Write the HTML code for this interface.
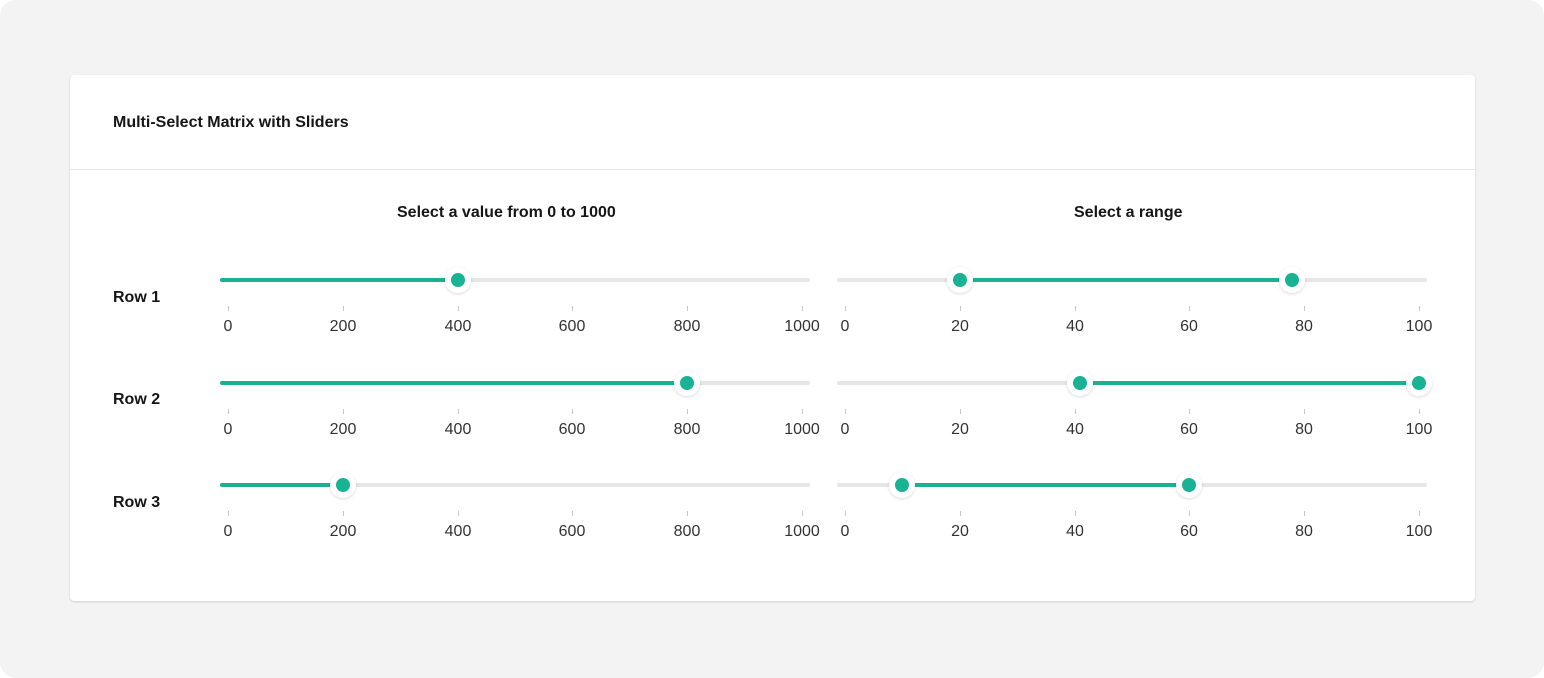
<!DOCTYPE html>
<html><head><meta charset="utf-8"><style>
body{margin:0;width:1544px;height:678px;background:#fff;font-family:"Liberation Sans",sans-serif;position:relative;overflow:hidden}
.bg{position:absolute;left:0;top:0;width:1544px;height:678px;background:#f3f3f3;border-radius:16px}
.card{position:absolute;left:70px;top:75px;width:1405px;height:526px;background:#fff;border-radius:4px;box-shadow:0 1px 2px rgba(0,0,0,.15)}
.hline{position:absolute;left:70px;top:169px;width:1405px;height:1px;background:#e6e6e6}
.t{position:absolute;color:#161616;font-size:16px;white-space:nowrap}
.b{font-weight:bold}
.tr{position:absolute;height:4px;border-radius:2px;background:#e6e6e6}
.f{position:absolute;height:4px;border-radius:2px;background:#19b394}
.th{position:absolute;width:26px;height:26px;border-radius:50%;background:#fff;box-shadow:0 1px 3px rgba(0,0,0,.15)}
.th::after{content:"";position:absolute;left:6px;top:6px;width:14px;height:14px;border-radius:50%;background:#19b394}
.tk{position:absolute;width:1px;height:5px;background:#c8c8c8}
.l{position:absolute;width:80px;margin-left:-40px;text-align:center;font-size:16px;color:#333}
</style></head><body>
<div class="bg"></div>
<div class="card"></div>
<div class="hline"></div>
<div class="t b" style="left:113px;top:114px;font-size:16px">Multi-Select Matrix with Sliders</div>
<div class="t b" style="left:397px;top:204px">Select a value from 0 to 1000</div>
<div class="t b" style="left:1074px;top:204px">Select a range</div>
<div class="t b" style="left:113px;top:289px">Row 1</div>
<div class="t b" style="left:113px;top:391px">Row 2</div>
<div class="t b" style="left:113px;top:494px">Row 3</div>

<!-- Row 1 -->
<div class="tr" style="left:220px;top:278px;width:590px"></div>
<div class="f" style="left:220px;top:278px;width:238px"></div>
<div class="th" style="left:445px;top:267px"></div>
<div class="tr" style="left:837px;top:278px;width:590px"></div>
<div class="f" style="left:960px;top:278px;width:332px"></div>
<div class="th" style="left:947px;top:267px"></div>
<div class="th" style="left:1279px;top:267px"></div>

<!-- Row 2 -->
<div class="tr" style="left:220px;top:381px;width:590px"></div>
<div class="f" style="left:220px;top:381px;width:467px"></div>
<div class="th" style="left:674px;top:370px"></div>
<div class="tr" style="left:837px;top:381px;width:590px"></div>
<div class="f" style="left:1080px;top:381px;width:339px"></div>
<div class="th" style="left:1067px;top:370px"></div>
<div class="th" style="left:1406px;top:370px"></div>

<!-- Row 3 -->
<div class="tr" style="left:220px;top:483px;width:590px"></div>
<div class="f" style="left:220px;top:483px;width:123px"></div>
<div class="th" style="left:330px;top:472px"></div>
<div class="tr" style="left:837px;top:483px;width:590px"></div>
<div class="f" style="left:902px;top:483px;width:287px"></div>
<div class="th" style="left:889px;top:472px"></div>
<div class="th" style="left:1176px;top:472px"></div>

<!-- ticks & labels row 1 -->
<div class="tk" style="left:228px;top:306px"></div><div class="l" style="left:228px;top:318px">0</div>
<div class="tk" style="left:343px;top:306px"></div><div class="l" style="left:343px;top:318px">200</div>
<div class="tk" style="left:458px;top:306px"></div><div class="l" style="left:458px;top:318px">400</div>
<div class="tk" style="left:572px;top:306px"></div><div class="l" style="left:572px;top:318px">600</div>
<div class="tk" style="left:687px;top:306px"></div><div class="l" style="left:687px;top:318px">800</div>
<div class="tk" style="left:802px;top:306px"></div><div class="l" style="left:802px;top:318px">1000</div>
<div class="tk" style="left:845px;top:306px"></div><div class="l" style="left:845px;top:318px">0</div>
<div class="tk" style="left:960px;top:306px"></div><div class="l" style="left:960px;top:318px">20</div>
<div class="tk" style="left:1075px;top:306px"></div><div class="l" style="left:1075px;top:318px">40</div>
<div class="tk" style="left:1189px;top:306px"></div><div class="l" style="left:1189px;top:318px">60</div>
<div class="tk" style="left:1304px;top:306px"></div><div class="l" style="left:1304px;top:318px">80</div>
<div class="tk" style="left:1419px;top:306px"></div><div class="l" style="left:1419px;top:318px">100</div>
<!-- row 2 -->
<div class="tk" style="left:228px;top:409px"></div><div class="l" style="left:228px;top:421px">0</div>
<div class="tk" style="left:343px;top:409px"></div><div class="l" style="left:343px;top:421px">200</div>
<div class="tk" style="left:458px;top:409px"></div><div class="l" style="left:458px;top:421px">400</div>
<div class="tk" style="left:572px;top:409px"></div><div class="l" style="left:572px;top:421px">600</div>
<div class="tk" style="left:687px;top:409px"></div><div class="l" style="left:687px;top:421px">800</div>
<div class="tk" style="left:802px;top:409px"></div><div class="l" style="left:802px;top:421px">1000</div>
<div class="tk" style="left:845px;top:409px"></div><div class="l" style="left:845px;top:421px">0</div>
<div class="tk" style="left:960px;top:409px"></div><div class="l" style="left:960px;top:421px">20</div>
<div class="tk" style="left:1075px;top:409px"></div><div class="l" style="left:1075px;top:421px">40</div>
<div class="tk" style="left:1189px;top:409px"></div><div class="l" style="left:1189px;top:421px">60</div>
<div class="tk" style="left:1304px;top:409px"></div><div class="l" style="left:1304px;top:421px">80</div>
<div class="tk" style="left:1419px;top:409px"></div><div class="l" style="left:1419px;top:421px">100</div>
<!-- row 3 -->
<div class="tk" style="left:228px;top:511px"></div><div class="l" style="left:228px;top:523px">0</div>
<div class="tk" style="left:343px;top:511px"></div><div class="l" style="left:343px;top:523px">200</div>
<div class="tk" style="left:458px;top:511px"></div><div class="l" style="left:458px;top:523px">400</div>
<div class="tk" style="left:572px;top:511px"></div><div class="l" style="left:572px;top:523px">600</div>
<div class="tk" style="left:687px;top:511px"></div><div class="l" style="left:687px;top:523px">800</div>
<div class="tk" style="left:802px;top:511px"></div><div class="l" style="left:802px;top:523px">1000</div>
<div class="tk" style="left:845px;top:511px"></div><div class="l" style="left:845px;top:523px">0</div>
<div class="tk" style="left:960px;top:511px"></div><div class="l" style="left:960px;top:523px">20</div>
<div class="tk" style="left:1075px;top:511px"></div><div class="l" style="left:1075px;top:523px">40</div>
<div class="tk" style="left:1189px;top:511px"></div><div class="l" style="left:1189px;top:523px">60</div>
<div class="tk" style="left:1304px;top:511px"></div><div class="l" style="left:1304px;top:523px">80</div>
<div class="tk" style="left:1419px;top:511px"></div><div class="l" style="left:1419px;top:523px">100</div>
</body></html>
